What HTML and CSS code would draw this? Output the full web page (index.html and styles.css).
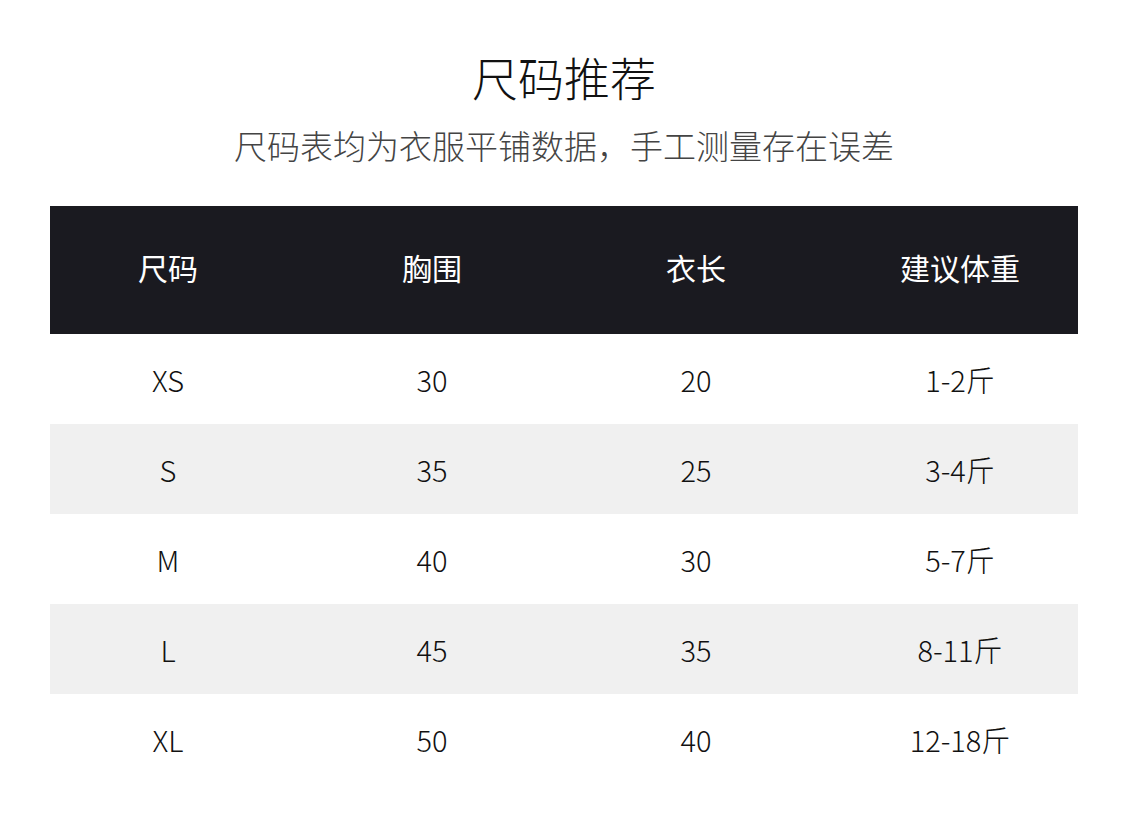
FILE: index.html
```html
<!DOCTYPE html>
<html lang="zh-CN">
<head>
<meta charset="utf-8">
<title>尺码推荐</title>
<link rel="stylesheet" href="styles.css">
</head>
<body>
<div class="page">
  <h1 class="title">尺码推荐</h1>
  <p class="subtitle">尺码表均为衣服平铺数据，手工测量存在误差</p>
  <div class="table">
    <div class="row head">
      <div class="cells"><span>尺码</span><span>胸围</span><span>衣长</span><span>建议体重</span></div>
    </div>
    <div class="row">
      <div class="cells"><span>XS</span><span>30</span><span>20</span><span>1-2斤</span></div>
    </div>
    <div class="row alt">
      <div class="cells"><span>S</span><span>35</span><span>25</span><span>3-4斤</span></div>
    </div>
    <div class="row">
      <div class="cells"><span>M</span><span>40</span><span>30</span><span>5-7斤</span></div>
    </div>
    <div class="row alt">
      <div class="cells"><span>L</span><span>45</span><span>35</span><span>8-11斤</span></div>
    </div>
    <div class="row">
      <div class="cells"><span>XL</span><span>50</span><span>40</span><span>12-18斤</span></div>
    </div>
  </div>
</div>
</body>
</html>
```

FILE: styles.css
```css
* { box-sizing: border-box; }
html, body { margin: 0; padding: 0; background: #ffffff; }
body {
  font-family: "Noto Sans CJK SC", "Noto Sans", sans-serif;
  color: #1c1c1c;
}
.page {
  width: 1028px;
  margin-left: 50px;
  padding-top: 48px;
  text-align: center;
}
.title {
  margin: 0;
  font-size: 46px;
  line-height: 56px;
  font-weight: 300;
  color: #111111;
}
.subtitle {
  margin: 19px 0 0;
  font-size: 33px;
  line-height: 44px;
  font-weight: 300;
  color: #444444;
}
.table {
  margin-top: 39px;
}
.row {
  height: 90px;
  display: flex;
  align-items: center;
}
.row.head {
  height: 128px;
  padding-bottom: 6px;
  background: #1a1a20;
  color: #ffffff;
}
.row.alt { background: #f0f0f0; }
.cells {
  flex: 1;
  display: grid;
  grid-template-columns: repeat(4, 1fr);
  margin: 0 -14px;
  font-size: 29px;
  line-height: 40px;
  font-weight: 300;
  color: #111111;
}
.head .cells {
  font-size: 30px;
  font-weight: 400;
  color: #ffffff;
}
```
